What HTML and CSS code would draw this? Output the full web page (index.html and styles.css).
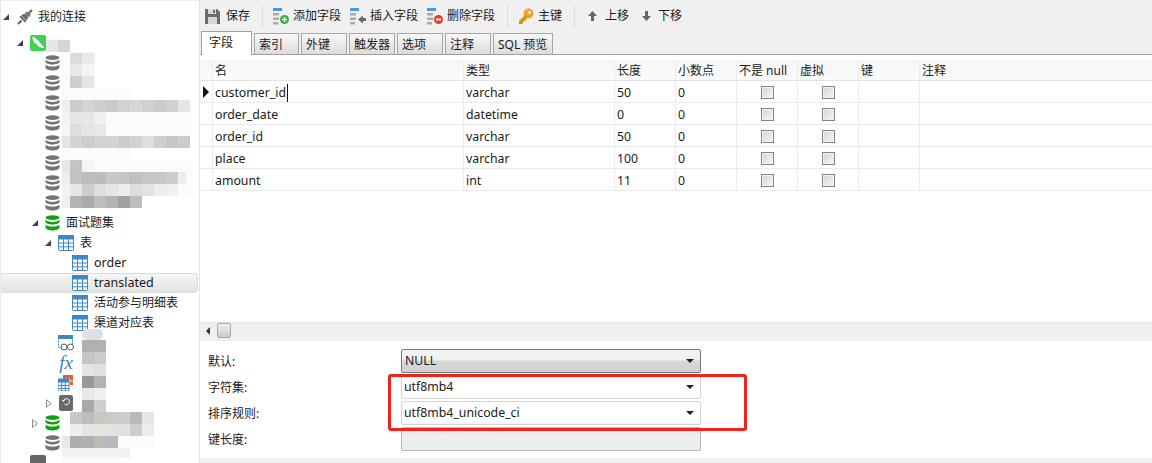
FILE: index.html
```html
<!DOCTYPE html>
<html lang="zh">
<head>
<meta charset="utf-8">
<title>表设计器</title>
<link rel="stylesheet" href="styles.css">
</head>
<body>
<svg class="defs" width="0" height="0">
  <symbol id="db" viewBox="0 0 15 16"><g fill="currentColor"><ellipse cx="7.5" cy="2.6" rx="7" ry="2.4"/><path d="M.5 4.6c1 1.700 3.800 2.300 7 2.300s6-.6 7-2.300v2.400c-.4 1.500-3.400 2.500-7 2.500s-6.600-1-7-2.500z"/><path d="M.5 9.400c1 1.500 3.800 2.100 7 2.100s6-.6 7-2.100v3.300c-.4 1.600-3.400 2.700-7 2.700s-6.600-1.100-7-2.700z"/></g></symbol>
  <symbol id="tbl" viewBox="0 0 16 16"><rect x=".5" y=".5" width="15" height="15" rx="1" fill="#fff" stroke="#3f86c4"/><rect x="0" y="0" width="16" height="4.500" fill="#3f86c4"/><path d="M5.500 4v11.500M10.500 4v11.500M1 8h14M1 11.800h14" stroke="#3f86c4" fill="none"/></symbol>
  <symbol id="closed" viewBox="0 0 6 9"><path d="M.5.800L5.300 4.500.5 8.200z" fill="#fff" stroke="#8a8a8a"/></symbol>
</svg>

<div class="app">
  <aside class="tree">
    <div class="node root"><i class="arrow open"></i><svg class="ico-conn" width="16" height="16" viewBox="0 0 16 16"><path d="M1 15l3.500-3.500M15 1l-3.500 3.500" stroke="#666" stroke-width="2.200"/><path d="M2.500 8l5.500 5.500 1.500-1.500L4 6.500z" fill="#666"/><path d="M4.500 6.500C6 5 8 4.500 9.500 6L10 6.500c1.500 1.500 1 3.500-.5 5z" fill="#666"/><path d="M7.500 4l4.500 4.500 1-1.500c.8-1.200.6-2.500-.3-3.500-1-.9-2.300-1.100-3.500-.3z" fill="#777"/></svg><span class="label">我的连接</span></div>
    <div class="node l1 conn"><i class="arrow open"></i><svg class="ico-mysql" width="16" height="16" viewBox="0 0 16 16"><rect width="16" height="16" rx="2" fill="#42d152"/><path d="M2 2.500c1.500-.5 3 .3 4 1.300C8 5 10 7.500 11 9c1 1.300 2.500 2.500 3.500 4-1.800.3-3.500 0-5-1.200-1.200-.3-2-1.300-2.800-2.500C5 8.500 3.700 7 3.500 5.500 3 4.500 2.500 3.500 2 2.500z" fill="#fff"/></svg></div>
    <div class="node l2"><svg class="db grey"><use href="#db"/></svg></div>
    <div class="node l2"><svg class="db grey"><use href="#db"/></svg></div>
    <div class="node l2"><svg class="db grey"><use href="#db"/></svg></div>
    <div class="node l2"><svg class="db grey"><use href="#db"/></svg></div>
    <div class="node l2"><svg class="db grey"><use href="#db"/></svg></div>
    <div class="node l2"><svg class="db grey"><use href="#db"/></svg></div>
    <div class="node l2"><svg class="db grey"><use href="#db"/></svg></div>
    <div class="node l2"><svg class="db grey"><use href="#db"/></svg></div>
    <div class="node l2a"><i class="arrow open"></i><svg class="db green"><use href="#db"/></svg><span class="label">面试题集</span></div>
    <div class="node l3"><i class="arrow open"></i><svg class="ti"><use href="#tbl"/></svg><span class="label">表</span></div>
    <div class="node l4"><svg class="ti"><use href="#tbl"/></svg><span class="label latin">order</span></div>
    <div class="node l4 selected"><svg class="ti"><use href="#tbl"/></svg><span class="label latin">translated</span></div>
    <div class="node l4"><svg class="ti"><use href="#tbl"/></svg><span class="label">活动参与明细表</span></div>
    <div class="node l4"><svg class="ti"><use href="#tbl"/></svg><span class="label">渠道对应表</span></div>
    <div class="node l3b"><svg class="ti" viewBox="0 0 16 16"><rect x=".5" y=".5" width="14" height="12" fill="#fff" stroke="#3f86c4" stroke-dasharray="2 1"/><rect width="15" height="4" fill="#3f86c4"/><circle cx="6" cy="12" r="3" fill="#fff" stroke="#555"/><circle cx="12.500" cy="12" r="3" fill="#fff" stroke="#555"/></svg></div>
    <div class="node l3b"><span class="fx">fx</span></div>
    <div class="node l3b"><svg class="ti" viewBox="0 0 16 16"><rect x="5" y="0" width="10" height="10" fill="#e0603c"/><path d="M8 3v7M11.500 3v7M5 6h10" stroke="#fff"/><rect x="0" y="4" width="11" height="12" fill="#fff" stroke="#3f86c4"/><rect x="0" y="4" width="11" height="3.500" fill="#3f86c4"/><path d="M3.700 7v9M7.300 7v9M0 10.500h11M0 13.500h11" stroke="#3f86c4"/></svg></div>
    <div class="node l3c"><svg class="arrow-closed"><use href="#closed"/></svg><svg class="ti" viewBox="0 0 16 16"><rect width="14" height="16" rx="2" fill="#6a6a6a"/><path d="M4.500 6a3 3 0 1 1 1 3" fill="none" stroke="#fff"/><path d="M3 5h3L4.500 7z" fill="#fff"/></svg></div>
    <div class="node l2b"><svg class="arrow-closed"><use href="#closed"/></svg><svg class="db green"><use href="#db"/></svg></div>
    <div class="node l2"><svg class="db grey"><use href="#db"/></svg></div>
    <div class="node l1b"><svg class="ico-srv" width="16" height="16" viewBox="0 0 16 16"><rect width="16" height="16" rx="2" fill="#666"/></svg></div>

    <svg class="mosaic" width="200" height="463">
      <path d="M46 36h14q8 4 10 16h26v36h36v12h60v36h-60v24h62v36H62V60q-1-6-2-8zM78 338h26v74h50v36h-34v15H62v-25h8v-13h8z" fill="#fbfbfb"/>
      <g id="m1">
        <rect x="46" y="40" width="12" height="12" fill="#e6e6e6"/><rect x="58" y="40" width="12" height="12" fill="#d6d6da"/>
        <rect x="70" y="53" width="12" height="11" fill="#dcdcdc"/><rect x="82" y="53" width="12" height="11" fill="#eaeaea"/>
        <rect x="70" y="64" width="12" height="12" fill="#e8e8e8"/><rect x="82" y="64" width="12" height="12" fill="#f2f4f5"/>
        <rect x="70" y="76" width="12" height="12" fill="#d0ced0"/><rect x="82" y="76" width="12" height="12" fill="#e4e6e6"/>
        <rect x="62" y="100" width="8" height="12" fill="#eee"/><rect x="70" y="100" width="12" height="12" fill="#cdcbcb"/><rect x="82" y="100" width="12" height="12" fill="#d5d5d3"/><rect x="94" y="100" width="12" height="12" fill="#d2cdd0"/><rect x="106" y="100" width="12" height="12" fill="#c8c9cb"/><rect x="118" y="100" width="12" height="12" fill="#d2d2d2"/><rect x="130" y="100" width="12" height="12" fill="#d9d7d5"/><rect x="142" y="100" width="12" height="12" fill="#d0d0d4"/><rect x="154" y="100" width="12" height="12" fill="#ccc9c9"/><rect x="166" y="100" width="12" height="12" fill="#cfd0d2"/><rect x="178" y="100" width="12" height="12" fill="#e4e5e7"/>
        <rect x="62" y="112" width="8" height="12" fill="#f3f3f3"/><rect x="70" y="112" width="24" height="12" fill="#e6e6e6"/><rect x="94" y="112" width="12" height="12" fill="#f0f0f2"/>
        <rect x="62" y="124" width="8" height="12" fill="#f5f5f5"/><rect x="70" y="124" width="12" height="12" fill="#dedede"/><rect x="82" y="124" width="12" height="12" fill="#e5e5e5"/><rect x="94" y="124" width="12" height="12" fill="#e8e8ea"/>
        <rect x="62" y="136" width="8" height="12" fill="#e6e4e2"/><rect x="70" y="136" width="12" height="12" fill="#d3d4d4"/><rect x="82" y="136" width="12" height="12" fill="#cdccca"/><rect x="94" y="136" width="12" height="12" fill="#d4d2d2"/><rect x="106" y="136" width="12" height="12" fill="#d5d3d3"/><rect x="118" y="136" width="12" height="12" fill="#d0cccc"/><rect x="130" y="136" width="12" height="12" fill="#d1d2d4"/><rect x="142" y="136" width="12" height="12" fill="#e1dddc"/><rect x="154" y="136" width="12" height="12" fill="#cfced2"/><rect x="166" y="136" width="12" height="12" fill="#cac5c6"/><rect x="178" y="136" width="12" height="12" fill="#cbcbd0"/>
        <rect x="62" y="160" width="8" height="12" fill="#e8e6e4"/><rect x="70" y="160" width="12" height="12" fill="#c4c4c4"/><rect x="82" y="160" width="12" height="12" fill="#f3f5f8"/>
        <rect x="62" y="172" width="8" height="12" fill="#eee"/><rect x="70" y="172" width="12" height="12" fill="#c2c2c2"/><rect x="82" y="172" width="12" height="12" fill="#bdbdbc"/><rect x="94" y="172" width="12" height="12" fill="#bcbcbc"/><rect x="106" y="172" width="12" height="12" fill="#c6c8ca"/><rect x="118" y="172" width="12" height="12" fill="#c5c5c2"/><rect x="130" y="172" width="12" height="12" fill="#bfc0c2"/><rect x="142" y="172" width="12" height="12" fill="#c6c6c2"/><rect x="154" y="172" width="12" height="12" fill="#c7c7c5"/><rect x="166" y="172" width="12" height="12" fill="#cdcdcb"/><rect x="178" y="172" width="8" height="12" fill="#eee"/>
        <rect x="62" y="184" width="8" height="12" fill="#f2f2f2"/><rect x="70" y="184" width="12" height="12" fill="#e6e6e6"/><rect x="82" y="184" width="12" height="12" fill="#cdcdcd"/><rect x="94" y="184" width="12" height="12" fill="#dfdedc"/><rect x="106" y="184" width="12" height="12" fill="#e4e5e8"/><rect x="118" y="184" width="12" height="12" fill="#ededed"/><rect x="130" y="184" width="12" height="12" fill="#dcdde0"/><rect x="142" y="184" width="12" height="12" fill="#e3e3e3"/><rect x="154" y="184" width="12" height="12" fill="#ededed"/><rect x="166" y="184" width="12" height="12" fill="#f0f0f0"/>
        <rect x="62" y="196" width="8" height="12" fill="#efefef"/><rect x="70" y="196" width="12" height="12" fill="#b2b2b8"/><rect x="82" y="196" width="12" height="12" fill="#abaaa5"/><rect x="94" y="196" width="12" height="12" fill="#bcbebc"/><rect x="106" y="196" width="12" height="12" fill="#b6b4b0"/><rect x="118" y="196" width="12" height="12" fill="#9fa2a6"/><rect x="130" y="196" width="12" height="12" fill="#bcbdbc"/>
      </g>
      <g id="m2">
        <rect x="82" y="329" width="21" height="11" rx="5" fill="#dde0e4"/>
        <rect x="82" y="340" width="12" height="12" fill="#b0b0b2"/><rect x="94" y="340" width="12" height="12" fill="#b2b2b4"/>
        <rect x="82" y="352" width="12" height="12" fill="#c4c4c4"/><rect x="94" y="352" width="12" height="12" fill="#cbcbcb"/>
        <rect x="82" y="364" width="12" height="12" fill="#e4e4e4"/><rect x="94" y="364" width="12" height="12" fill="#dfe0e2"/>
        <rect x="82" y="376" width="12" height="12" fill="#9a9896"/><rect x="94" y="376" width="12" height="12" fill="#b1b3b6"/>
        <rect x="82" y="388" width="12" height="12" fill="#e8e8e8"/><rect x="94" y="388" width="12" height="12" fill="#eef0ee"/>
        <rect x="82" y="400" width="12" height="12" fill="#aaa8a6"/><rect x="94" y="400" width="12" height="12" fill="#cdd0d2"/>
        <rect x="70" y="412" width="12" height="12" fill="#c8c8c6"/><rect x="82" y="412" width="12" height="12" fill="#bcbdbe"/><rect x="94" y="412" width="12" height="12" fill="#c9c7c0"/><rect x="106" y="412" width="12" height="12" fill="#c9cacb"/><rect x="118" y="412" width="12" height="12" fill="#ccccce"/><rect x="130" y="412" width="12" height="12" fill="#b9b9bb"/><rect x="142" y="412" width="12" height="12" fill="#e6e6e6"/>
        <rect x="70" y="424" width="12" height="12" fill="#eee"/><rect x="82" y="424" width="12" height="12" fill="#e4e4e6"/><rect x="94" y="424" width="12" height="12" fill="#e6e4e0"/><rect x="106" y="424" width="12" height="12" fill="#e2e2e2"/><rect x="118" y="424" width="12" height="12" fill="#e0e2e2"/><rect x="130" y="424" width="12" height="12" fill="#cdced0"/><rect x="142" y="424" width="12" height="12" fill="#ececec"/>
        <rect x="62" y="436" width="8" height="12" fill="#e8e8e8"/><rect x="70" y="436" width="12" height="12" fill="#adadad"/><rect x="82" y="436" width="12" height="12" fill="#b0b0b0"/><rect x="94" y="436" width="12" height="12" fill="#bcbbb8"/><rect x="106" y="436" width="12" height="12" fill="#b8bac0"/>
        <rect x="62" y="448" width="68" height="10" fill="#f2f2f2"/>
      </g>
    </svg>
  </aside>

  <main class="main">
    <div class="toolbar">
      <button class="tool save"><svg width="15" height="16" viewBox="0 0 15 16"><path d="M0 1h12l3 3v12H0z" fill="#6b6b6b"/><rect x="3" y="1" width="8" height="5" fill="#d8d8d8"/><rect x="8" y="2" width="2" height="3" fill="#6b6b6b"/><rect x="3" y="9" width="9" height="7" fill="#d8d8d8"/></svg><span>保存</span></button>
      <i class="sep"></i>
      <button class="tool"><svg width="16" height="18" viewBox="0 0 16 18"><rect y="1" width="9" height="3" fill="#4a9cd8"/><rect y="6" width="6" height="2.500" fill="#aaa"/><rect y="10.500" width="6" height="2.500" fill="#aaa"/><rect y="15" width="5" height="2.500" fill="#aaa"/><circle cx="11.500" cy="12.500" r="4.500" fill="#3fae3f"/><path d="M9 12.500h5M11.500 10v5" stroke="#fff" stroke-width="1.500"/></svg><span>添加字段</span></button>
      <button class="tool"><svg width="16" height="18" viewBox="0 0 16 18"><rect y="1" width="9" height="3" fill="#4a9cd8"/><rect y="6" width="6" height="2.500" fill="#aaa"/><rect y="10.500" width="6" height="2.500" fill="#aaa"/><rect y="15" width="5" height="2.500" fill="#aaa"/><path d="M8 12.500l5-4v2.500h3v3h-3v2.500z" fill="#666"/></svg><span>插入字段</span></button>
      <button class="tool"><svg width="16" height="18" viewBox="0 0 16 18"><rect y="1" width="9" height="3" fill="#4a9cd8"/><rect y="6" width="6" height="2.500" fill="#aaa"/><rect y="10.500" width="6" height="2.500" fill="#aaa"/><rect y="15" width="5" height="2.500" fill="#aaa"/><circle cx="11.500" cy="12.500" r="4.500" fill="#e0402f"/><path d="M9 12.500h5" stroke="#fff" stroke-width="1.800"/></svg><span>删除字段</span></button>
      <i class="sep"></i>
      <button class="tool"><svg width="16" height="16" viewBox="0 0 16 16"><circle cx="10.500" cy="5.500" r="5" fill="#eda623"/><circle cx="11.500" cy="4.500" r="1.400" fill="#f0f0f0"/><path d="M7 7L1 13v3h3l1-1v-2h2l2-3z" fill="#d88f14"/></svg><span>主键</span></button>
      <i class="sep"></i>
      <button class="tool up"><svg width="11" height="12" viewBox="0 0 11 12"><path d="M5.500 1L10 6H7v5H4V6H1z" fill="#666"/></svg><span>上移</span></button>
      <button class="tool down"><svg width="11" height="12" viewBox="0 0 11 12"><path d="M5.500 11L10 6H7V1H4v5H1z" fill="#666"/></svg><span>下移</span></button>
    </div>

    <div class="tabs">
      <div class="tab active">字段</div>
      <div class="tab t44">索引</div>
      <div class="tab">外键</div>
      <div class="tab">触发器</div>
      <div class="tab">选项</div>
      <div class="tab">注释</div>
      <div class="tab t60">SQL 预览</div>
    </div>

    <div class="grid">
      <div class="row head">
        <div class="mark"></div><div class="c">名</div><div class="c">类型</div><div class="c">长度</div><div class="c">小数点</div><div class="c">不是 null</div><div class="c">虚拟</div><div class="c">键</div><div class="c">注释</div>
      </div>
      <div class="row">
        <div class="mark"><i class="pointer"></i></div><div class="c"><span class="caret">customer_id</span></div><div class="c">varchar</div><div class="c">50</div><div class="c">0</div><div class="c ck"><i class="check"></i></div><div class="c ck"><i class="check"></i></div><div class="c"></div><div class="c"></div>
      </div>
      <div class="row">
        <div class="mark"></div><div class="c">order_date</div><div class="c">datetime</div><div class="c">0</div><div class="c">0</div><div class="c ck"><i class="check"></i></div><div class="c ck"><i class="check"></i></div><div class="c"></div><div class="c"></div>
      </div>
      <div class="row">
        <div class="mark"></div><div class="c">order_id</div><div class="c">varchar</div><div class="c">50</div><div class="c">0</div><div class="c ck"><i class="check"></i></div><div class="c ck"><i class="check"></i></div><div class="c"></div><div class="c"></div>
      </div>
      <div class="row">
        <div class="mark"></div><div class="c">place</div><div class="c">varchar</div><div class="c">100</div><div class="c">0</div><div class="c ck"><i class="check"></i></div><div class="c ck"><i class="check"></i></div><div class="c"></div><div class="c"></div>
      </div>
      <div class="row">
        <div class="mark"></div><div class="c">amount</div><div class="c">int</div><div class="c">11</div><div class="c">0</div><div class="c ck"><i class="check"></i></div><div class="c ck"><i class="check"></i></div><div class="c"></div><div class="c"></div>
      </div>
    </div>

    <div class="scrollbar"><i class="sb-left"></i><i class="sb-thumb"></i></div>

    <div class="form">
      <label>默认:</label><div class="select null"><span>NULL</span><i class="drop"></i></div>
      <label>字符集:</label><div class="select"><span>utf8mb4</span><i class="drop"></i></div>
      <label>排序规则:</label><div class="select"><span>utf8mb4_unicode_ci</span><i class="drop"></i></div>
      <label>键长度:</label><div class="input"></div>
      <label class="cklabel"><i class="check"></i><span>二进制</span></label>
    </div>
    <div class="highlight"></div>
  </main>
</div>
</body>
</html>
```

FILE: styles.css
```css
* { box-sizing: border-box; }
html, body { margin: 0; height: 463px; overflow: hidden; background: #f0f0f0; }
body { font: 12px/20px "Noto Sans", "Noto Sans CJK SC", sans-serif; color: #1a1a1a; }
.defs { position: absolute; }
.app { display: flex; height: 463px; position: relative; }

/* tree */
.tree { width: 200px; flex: none; position: relative; background: #fff; padding-top: 6px; overflow: hidden; border-left: 1px solid #e8e8e8; border-top: 1px solid #eee; border-right: 1px solid #e4e4e4; }
.node { height: 20px; display: flex; align-items: center; position: relative; white-space: nowrap; }
.root { padding-left: 2px; }
.root .arrow { margin-right: 8px; }
.root .label { margin-left: 5px; }
.conn { margin-top: 6px; }
.l1 { padding-left: 16px; }
.l1b { padding-left: 29px; }
.l2 { padding-left: 44px; }
.l2a { padding-left: 31px; }
.l2b { padding-left: 31px; }
.l3 { padding-left: 44px; }
.l3b { padding-left: 57px; }
.l3c { padding-left: 45px; }
.l4 { padding-left: 71px; }
.label { margin-left: 6px; position: relative; }
.latin { font-size: 12.500px; }
.arrow { display: block; flex: none; margin-right: 7px; }
.arrow.open { width: 6px; height: 6px; background: #444; clip-path: polygon(100% 0, 100% 100%, 0 100%); }
.arrow-closed { width: 6px; height: 9px; flex: none; margin-right: 7px; }
.db { width: 15px; height: 16px; flex: none; }
.grey { color: #757575; }
.green { color: #13a113; }
.ti { width: 16px; height: 16px; flex: none; }
.ico-conn, .ico-mysql, .ico-srv { flex: none; }
.selected { background: linear-gradient(#f6f6f6, #e2e2e2); border: 1px solid #dcdcdc; border-left: 0; border-radius: 0 4px 4px 0; width: 197px; }
.fx { font: italic 19px/20px "Liberation Serif", serif; color: #3f7fb8; width: 16px; text-align: center; }
.mosaic { position: absolute; left: -1px; top: -1px; pointer-events: none; }

/* main column */
.main { flex: 1; display: flex; flex-direction: column; position: relative; min-width: 0; }
.toolbar { height: 31px; flex: none; display: flex; align-items: center; padding: 1px 0 0 5px; background: #f0f0f0; }
.tool { all: unset; display: flex; align-items: center; gap: 4px; color: #1a1a1a; font-size: 12px; margin-right: 9px; }
.save { gap: 6px; }
.up { gap: 7px; margin: 0 12px 0 2px; }
.down { gap: 6px; }
.sep { width: 1px; height: 23px; background: #dcdcdc; margin: 0 10px 0 3px; }
.tabs { height: 24px; flex: none; display: flex; align-items: flex-end; gap: 2px; padding-left: 1px; border-bottom: 1px solid #a0a0a0; background: #f0f0f0; }
.tab { height: 21px; padding-left: 4px; line-height: 21px; background: linear-gradient(#f8f8f8, #dcdcdc); border: 1px solid #a8a8a8; border-bottom: 0; width: 46px; font-size: 12px; }
.tab.active { width: 51px; height: 24px; padding-left: 7px; line-height: 22px; background: #fff; position: relative; top: 1px; border-color: #a0a0a0; }
.tab.t44 { width: 45px; }
.tab.t60 { width: 60px; }
.grid { flex: 1; background: #fff; padding-top: 5px; min-height: 0; }
.row { display: grid; grid-template-columns: 12px 251px 151px 61px 61px 61px 61px 61px 1fr; height: 22px; border-bottom: 1px solid #eaeaea; font-size: 12.300px; }
.row.head { height: 21px; background: linear-gradient(#f6f6f6 0, #fbfbfb 100%); font-size: 12px; border-bottom-color: #e2e2e2; }
.c { border-left: 1px solid #ececec; padding: 1px 0 0 2px; line-height: 21px; white-space: nowrap; overflow: hidden; }
.row.head .c { padding-top: 0; line-height: 22px; }
.ck { display: flex; align-items: center; justify-content: center; padding: 1px 0 0; }
.mark { display: flex; align-items: center; padding-left: 3px; }
.pointer { width: 0; height: 0; border-style: solid; border-width: 6px 0 6px 6px; border-color: transparent transparent transparent #111; }
.caret { border-right: 1px solid #111; padding-right: 1px; display: inline-block; height: 18px; line-height: 18px; }
.check { width: 13px; height: 13px; display: block; flex: none; border: 1px solid #848484; background: linear-gradient(135deg, #d4d4d4, #f6f6f6); box-shadow: inset 0 0 0 1px #f2f2f2; }
.scrollbar { height: 19px; flex: none; display: flex; align-items: flex-start; background: #f0f0f0; border-top: 1px solid #e4e4e4; padding-left: 6px; }
.sb-left { width: 0; height: 0; margin-top: 4px; border-style: solid; border-width: 4px 4px 4px 0; border-color: transparent #333 transparent transparent; }
.sb-thumb { width: 14px; height: 15px; margin-left: 7px; border: 1px solid #aaa; border-radius: 2px; background: linear-gradient(#f2f2f2, #c8c8c8); }
.form { height: 117px; flex: none; margin-bottom: 5px; background: #fff; overflow: hidden; padding: 8px 0 0 8px; display: grid; grid-template-columns: 193px 300px; grid-auto-rows: 26px; }
.form label { font-size: 12px; line-height: 25px; }
.select { height: 24px; border: 1px solid #d4d4d4; border-radius: 2px; display: flex; align-items: center; justify-content: space-between; padding: 0 4px 0 2px; background: #fff; font-size: 12.300px; }
.select.null { border-color: #777; background: linear-gradient(#f4f4f4 0, #f0f0f0 45%, #d8d8d8 50%, #d0d0d0 100%); padding-left: 3px; }
.drop { width: 0; height: 0; border-style: solid; border-width: 4px 4px 0; border-color: #222 transparent transparent; margin-right: 2px; }
.input { height: 24px; border: 1px solid #b4b4b4; border-radius: 2px; background: #eee; }
.cklabel { display: flex; align-items: center; gap: 6px; grid-column: 1 / 3; margin-top: 2px; }
.highlight { position: absolute; left: 188px; top: 374px; width: 359px; height: 57px; border: 3px solid #f5211b; border-radius: 3px; pointer-events: none; }
```
